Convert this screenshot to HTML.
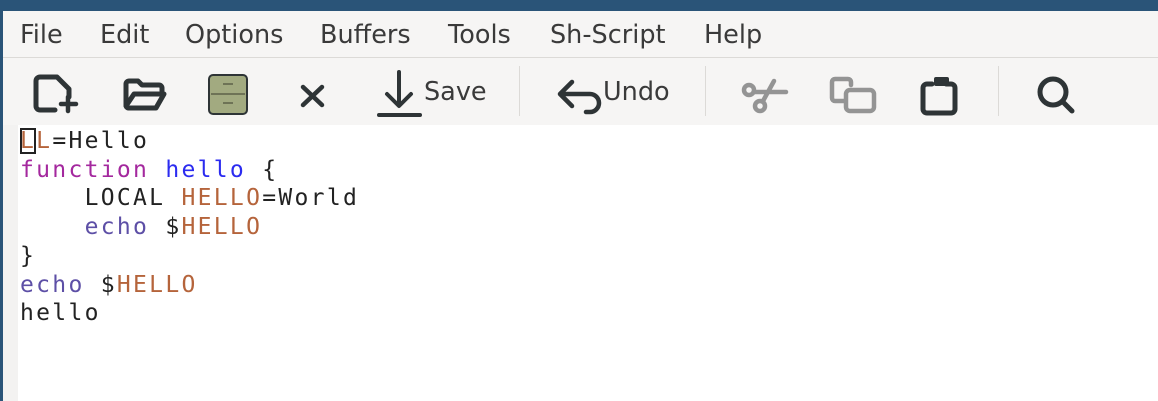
<!DOCTYPE html>
<html><head><style>
body{margin:0;width:1158px;height:401px;overflow:hidden;background:#fff;position:relative;font-family:"DejaVu Sans","Liberation Sans",sans-serif}
.title{position:absolute;left:0;top:0;width:1158px;height:11px;background:#2a5478}
.lb{position:absolute;left:0;top:0;width:3px;height:401px;background:#2a5478}
.menu{position:absolute;left:3px;top:11px;width:1155px;height:46px;background:#f6f5f4;border-bottom:1px solid #dcdad7}
.menu span{position:absolute;top:9px;font-size:25.5px;color:#3a3a3a}
.tool{position:absolute;left:3px;top:58px;width:1155px;height:67px;background:#f6f5f4}
.gut{position:absolute;left:3px;top:125px;width:15px;height:276px;background:#f3f2f1}
.sep{position:absolute;top:8px;width:1px;height:50px;background:#dcdad7}
.tl{position:absolute;top:19px;font-size:25.5px;color:#3a3a3a}
.code{position:absolute;left:20px;top:127px;font-family:"DejaVu Sans Mono","Liberation Mono",monospace;font-size:23px;letter-spacing:2.3px;line-height:28.7px;color:#222;white-space:pre}
.o{color:#b5643b}.p{color:#a4289e}.b{color:#2b2bf0}.v{color:#5d4fa6}
svg{position:absolute}
</style></head><body>
<div class="title"></div><div class="lb"></div>
<div class="menu">
<span style="left:17px">File</span><span style="left:97px">Edit</span><span style="left:182px">Options</span><span style="left:317px">Buffers</span><span style="left:445px">Tools</span><span style="left:547px">Sh-Script</span><span style="left:701px">Help</span>
</div>
<div class="tool">
<svg style="left:0;top:2px" width="1155" height="67" viewBox="3 58 1155 67">
<g fill="none" stroke="#2e3436" stroke-width="5" stroke-linecap="round" stroke-linejoin="round">
<path d="M55 108H40a4 4 0 0 1-4-4V79a4 4 0 0 1 4-4h17l12 12v8"/>
<path d="M68 95v14M61 102h15" stroke-width="4.5"/>
<path d="M126 104V82a3 3 0 0 1 3-3h9l4 4h17a3 3 0 0 1 3 3v3M126 104l8-12h30l-8 14h-27a3 3 0 0 1-3-2z"/>
<path d="M303 85l19 18M322 85l-19 18" stroke-width="4.5"/>
<path d="M399 70v33M387 92l12 12 12-12" stroke-width="4"/>
<path d="M379 113h41" stroke-width="4"/>
<path d="M560 92h30a9 9 0 0 1 0 18h-4M572 80l-12 12 12 12" stroke-width="4.5"/>
<path d="M946 82h5a4 4 0 0 1 4 4v21a4 4 0 0 1-4 4h-24a4 4 0 0 1-4-4V86a4 4 0 0 1 4-4h5"/>
<circle cx="1053" cy="90" r="13"/><path d="M1063 100l9 9"/>
</g>
<rect x="934" y="75" width="15" height="9" rx="2" fill="#2e3436"/>
<g fill="none" stroke="#949494" stroke-width="4.5" stroke-linecap="round" stroke-linejoin="round">
<circle cx="749" cy="88" r="5"/><circle cx="760" cy="104" r="5"/><path d="M754 90l32 0M763 99l11-20"/>
<path d="M844 99h-9a3 3 0 0 1-3-3V80a3 3 0 0 1 3-3h13a3 3 0 0 1 3 3v3"/>
<rect x="846" y="88" width="28" height="21" rx="4"/>
</g>
<rect x="209" y="73" width="38" height="39" rx="4" fill="#a2aa80" stroke="#2e3436" stroke-width="2"/>
<path d="M211 92h34" stroke="#6e7356" stroke-width="2"/>
<path d="M223 82h10M223 101h10" stroke="#6e7356" stroke-width="2"/>
</svg>
<span class="tl" style="left:421px">Save</span>
<span class="tl" style="left:600px">Undo</span>
<div class="sep" style="left:516px"></div><div class="sep" style="left:702px"></div><div class="sep" style="left:995px"></div>
</div>
<div class="gut"></div>
<div class="code"><span class="o" style="outline:2px solid #222;outline-offset:-2px">L</span><span class="o">L</span>=Hello
<span class="p">function</span> <span class="b">hello</span> {
    LOCAL <span class="o">HELLO</span>=World
    <span class="v">echo</span> $<span class="o">HELLO</span>
}
<span class="v">echo</span> $<span class="o">HELLO</span>
hello</div>
</body></html>
